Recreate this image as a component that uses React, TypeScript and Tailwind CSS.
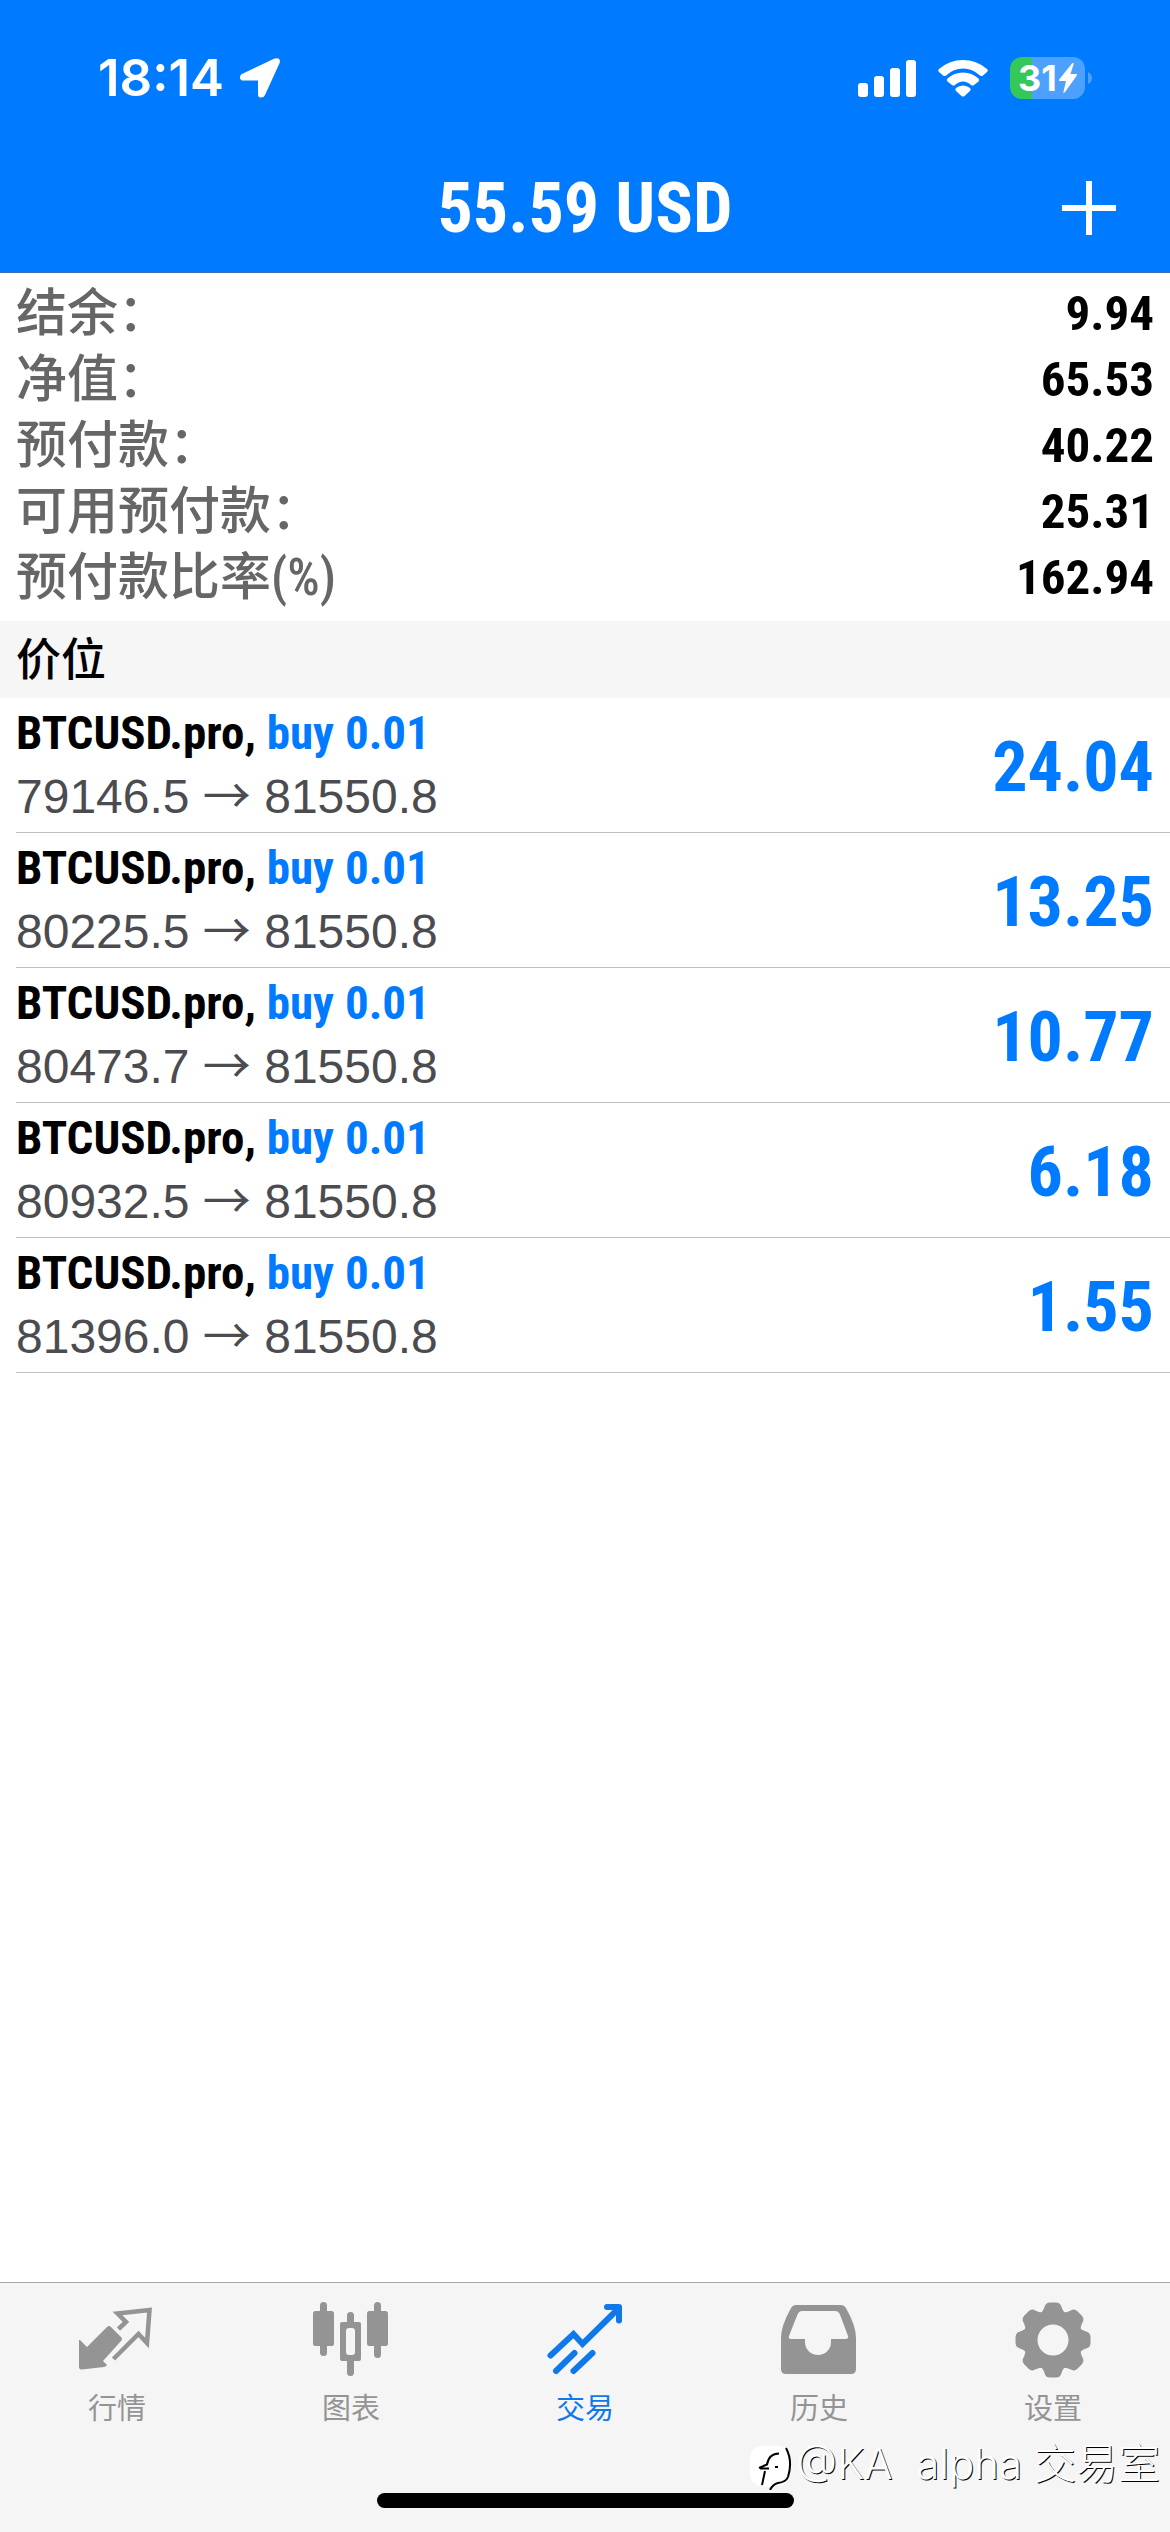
import type { ReactNode } from 'react';

const summary = [
  { label: '结余：', value: '9.94' },
  { label: '净值：', value: '65.53' },
  { label: '预付款：', value: '40.22' },
  { label: '可用预付款：', value: '25.31' },
  { label: '预付款比率(%)', value: '162.94' },
];

const positions = [
  { symbol: 'BTCUSD.pro', side: 'buy 0.01', open: '79146.5', current: '81550.8', profit: '24.04' },
  { symbol: 'BTCUSD.pro', side: 'buy 0.01', open: '80225.5', current: '81550.8', profit: '13.25' },
  { symbol: 'BTCUSD.pro', side: 'buy 0.01', open: '80473.7', current: '81550.8', profit: '10.77' },
  { symbol: 'BTCUSD.pro', side: 'buy 0.01', open: '80932.5', current: '81550.8', profit: '6.18' },
  { symbol: 'BTCUSD.pro', side: 'buy 0.01', open: '81396.0', current: '81550.8', profit: '1.55' },
];

const QuotesIcon = () => (
  <svg viewBox="0 0 76 76" className="size-[76px]" fill="none">
    <path
      d="M1 38 8 45 28 25q2-2 4 0l10 10q2 2 0 4L24 59l4 4q-1 1.5-3 2L3 67.5q-3 .5-3-3V38z"
      fill="currentColor"
    />
    <path d="M39.5 27 47 20l-8.5-8.5L70.5 8 68 41l-8.5-9L34.5 57" stroke="currentColor" strokeWidth="4.5" />
  </svg>
);

const ChartIcon = () => (
  <svg viewBox="0 0 76 76" className="size-[76px]" fill="currentColor">
    <rect x="7" y="0" width="7" height="54" rx="3.5" />
    <rect x="0" y="9" width="21" height="35" rx="2.5" />
    <rect x="61" y="0" width="7" height="56" rx="3.5" />
    <rect x="54" y="9" width="21" height="35" rx="2.5" />
    <path d="M34 13.5a3.5 3.5 0 0 1 7 0V20H46q2 0 2 2v35q0 2-2 2h-5v11.5a3.5 3.5 0 0 1-7 0V59H29q-2 0-2-2V22q0-2 2-2h5zM36 26q-3 0-3 3v21q0 3 3 3h3q3 0 3-3V29q0-3-3-3z" />
  </svg>
);

const TradeIcon = () => (
  <svg
    viewBox="0 0 76 76"
    className="size-[76px]"
    fill="none"
    stroke="currentColor"
    strokeWidth="6"
    strokeLinecap="round"
    strokeLinejoin="round"
  >
    <path d="M3.5 53.5 26.5 32l9 10L72 6" strokeLinejoin="miter" />
    <path d="M60 5h12v13.5" />
    <path d="M9 69 27.5 51M26.5 69 45.5 51" />
  </svg>
);

const HistoryIcon = () => (
  <svg viewBox="0 0 76 76" className="size-[76px]" fill="currentColor" fillRule="evenodd">
    <path d="M15 3h45q3.5 0 5.5 4Q75 24 75 36v31q0 5-5 5H5q-5 0-5-5V36Q0 24 9.500 7q2-4 5.500-4zm6 6q-3 0-4.500 3.500L8 34q-1 3 2 3h14v3a13 13 0 0 0 26 0v-3h14q4 0 3-3l-7.500-20Q58 9 54 9z" />
  </svg>
);

const SettingsIcon = () => (
  <svg viewBox="0 0 76 76" className="size-[76px]" fill="currentColor">
    <g transform="translate(38 38)">
      {[0, 45, 90, 135, 180, 225, 270, 315].map((angle) => (
        <path
          key={angle}
          transform={`rotate(${angle})`}
          d="M-15-24Q-10-28-8.5-33-7.5-37.5-3-37.5H3Q7.5-37.5 8.5-33 10-28 15-24z"
        />
      ))}
      <path fillRule="evenodd" d="M0-30a30 30 0 1 1 0 60 30 30 0 0 1 0-60zm0 14.5a15.5 15.5 0 1 0 0 31 15.5 15.5 0 0 0 0-31z" />
    </g>
  </svg>
);

const tabs: { label: string; icon: ReactNode; active?: boolean }[] = [
  { label: '行情', icon: <QuotesIcon /> },
  { label: '图表', icon: <ChartIcon /> },
  { label: '交易', icon: <TradeIcon />, active: true },
  { label: '历史', icon: <HistoryIcon /> },
  { label: '设置', icon: <SettingsIcon /> },
];

function StatusBar() {
  return (
    <div className="flex items-center justify-between pt-[34px] pr-[78px] pl-[98px] font-['Inter',sans-serif]">
      <div className="flex items-center gap-4">
        <span className="text-[51px] leading-[88px] font-semibold">18:14</span>
        <svg viewBox="0 0 40 40" className="size-10" fill="currentColor">
          <path d="M34 .8Q38-.8 39.5 1.6q.8 1.4 0 3.6L25 37Q24 39.6 21 39.6T18 36.5V22.5H3.5Q0 22.5 0 19.4T3 15.4z" />
        </svg>
      </div>
      <div className="flex items-center">
        <svg viewBox="0 0 58 38" className="h-[38px] w-[58px]" fill="currentColor">
          <rect x="0" y="24" width="10" height="14" rx="3" />
          <rect x="16" y="17" width="10" height="21" rx="3" />
          <rect x="32" y="9" width="10" height="29" rx="3" />
          <rect x="48" y="1" width="10" height="37" rx="3" />
        </svg>
        <svg viewBox="0 0 50 38" className="ml-[22px] h-[38px] w-[50px]" fill="currentColor">
          <path d="M25 1Q38.5 1 49 10q1.5 1.5 0 3l-4 3.5q-1.5 1-3 0Q34.5 9.5 25 9.5T8 16.5q-1.5 1-3 0L1 13q-1.5-1.5 0-3Q11.5 1 25 1z" />
          <path d="M25 13.5q9 0 15.5 6 1.5 1.5 0 3L36 26q-1.5 1-3 0-3.5-3.5-8-3.5T17 26q-1.5 1-3 0l-4.5-3.5q-1.5-1.5 0-3 6.5-6 15.5-6z" />
          <path d="M25 26.5q4 0 7 2.5 1.5 1.5 0 3l-5.5 5q-1.5 1-3 0L18 32q-1.5-1.5 0-3 3-2.5 7-2.5z" />
        </svg>
        <div className="ml-[22px] flex h-[42px] w-[75px] items-center justify-center gap-0.5 rounded-xl bg-linear-to-r from-[#34c759] from-30% to-[#4ca1ff] to-30% text-[36px] leading-[42px] font-bold">
          <span>31</span>
          <svg viewBox="0 0 18 30" className="h-[30px] w-[18px]" fill="currentColor">
            <path d="M13 .5Q15-1 14.5 1.5L11.5 11H17q2 0 .5 2L6 29q-2 2-1.5-.5L7 18H1q-2 0-.5-2z" />
          </svg>
        </div>
        <svg viewBox="0 0 4 12" className="ml-[3px] h-3 w-1" fill="#4ca1ff">
          <path d="M0 0q4 2 4 6t-4 6z" />
        </svg>
      </div>
    </div>
  );
}

export default function App() {
  return (
    <div className="flex min-h-screen flex-col bg-white font-['Roboto_Condensed','Noto_Sans_CJK_SC',sans-serif]">
      <header className="border-b border-[#3a6fb8] bg-[#007aff] text-white">
        <StatusBar />
        <div className="grid grid-cols-[1fr_auto_1fr] items-center px-[54px] pt-7 pb-1.5">
          <h1 className="col-start-2 text-[70px] leading-[116px] font-bold">55.59 USD</h1>
          <button type="button" aria-label="添加" className="justify-self-end">
            <svg viewBox="0 0 54 54" className="size-[54px]" stroke="currentColor" strokeWidth="6">
              <path d="M0 27h54M27 0v54" />
            </svg>
          </button>
        </div>
      </header>

      <main className="flex-1">
        <dl className="px-4 pt-2 pb-2.5">
          {summary.map((item) => (
            <div key={item.label} className="flex items-center justify-between">
              <dt className="text-[51px] leading-[66px] font-medium text-[#666]">{item.label}</dt>
              <dd className="text-[49px] leading-[66px] font-bold text-black">{item.value}</dd>
            </div>
          ))}
        </dl>

        <h2 className="bg-[#f6f6f6] px-4 pt-0.5 text-[45px] leading-[75px] font-medium text-black">价位</h2>

        <ul className="pl-4">
          {positions.map((item) => (
            <li key={item.open} className="flex h-[135px] items-center justify-between border-b border-[#c0c0c4] pr-4">
              <div>
                <p className="text-[47px] leading-[64px] font-bold text-black">
                  {item.symbol}, <span className="text-[#007aff]">{item.side}</span>
                </p>
                <p className="font-['Liberation_Sans',sans-serif] text-[48px] leading-[64px] text-[#4c4c50]">
                  {item.open} <span className="font-['Noto_Sans_CJK_SC',sans-serif] leading-none">→</span> {item.current}
                </p>
              </div>
              <span className="pt-1 text-[70px] leading-[96px] font-bold text-[#007aff]">{item.profit}</span>
            </li>
          ))}
        </ul>
      </main>

      <footer className="relative border-t border-[#a8a8a8] bg-[#f5f5f5]">
        <nav className="grid grid-cols-5 pt-[19px]">
          {tabs.map((tab) => (
            <a
              key={tab.label}
              href="#"
              className={`flex flex-col items-center gap-2.5 ${tab.active ? 'text-[#0f79ea]' : 'text-[#949494]'}`}
            >
              {tab.icon}
              <span className="text-[29px] leading-[42px]">{tab.label}</span>
            </a>
          ))}
        </nav>
        <div className="mx-auto mt-[63px] mb-6 h-[15px] w-[417px] rounded-full bg-black" />

        <div className="absolute right-2.5 bottom-10 flex items-center gap-0.5">
          <svg viewBox="0 0 44 52" className="h-[52px] w-11" fill="none">
            <rect x="0" y="8" width="40" height="40" rx="12" fill="#fff" />
            <path
              d="M29 15.5Q19 15.5 17 26.5L9 30M19 30.5h-9M15 33l-3 14M25 29h3M36 10q7 13 2 29-2 5-10 6-5 1-8 7"
              stroke="#000"
              strokeWidth="2"
            />
          </svg>
          <span className="font-['Inter','Noto_Sans_CJK_SC',sans-serif] text-[42px] leading-[56px] font-light whitespace-pre text-white [text-shadow:1px_1px_0_#000]">
            @KA  alpha 交易室
          </span>
        </div>
      </footer>
    </div>
  );
}
